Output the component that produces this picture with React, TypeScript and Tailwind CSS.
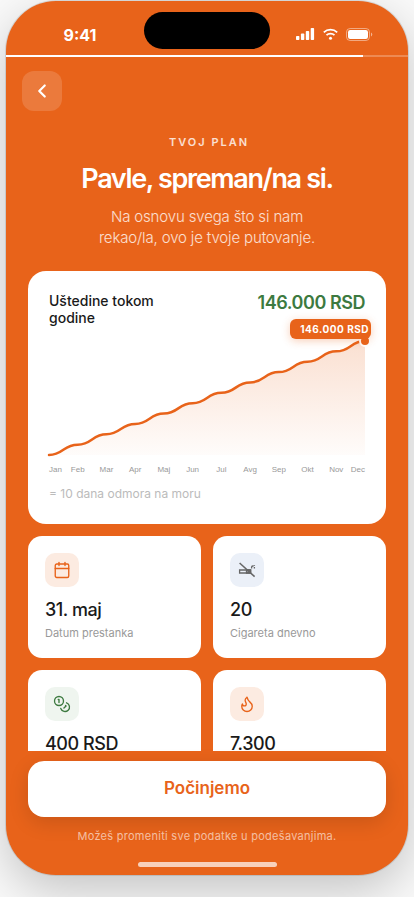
import type { ReactNode } from "react";
import { Calendar, ChevronLeft, Coins, Flame } from "lucide-react";

const MONTHS = [
  "Jan",
  "Feb",
  "Mar",
  "Apr",
  "Maj",
  "Jun",
  "Jul",
  "Avg",
  "Sep",
  "Okt",
  "Nov",
  "Dec",
];

const CHART = { width: 316, height: 143, top: 7, bottom: 121 };

const points = MONTHS.map((_, i) => {
  const ratio = i / (MONTHS.length - 1);
  return {
    x: ratio * CHART.width,
    y: CHART.bottom - ratio * (CHART.bottom - CHART.top),
  };
});

const linePath = points.reduce((path, p, i) => {
  if (i === 0) return `M${p.x},${p.y}`;
  const prev = points[i - 1];
  const mid = (prev.x + p.x) / 2;
  return `${path} C${mid},${prev.y} ${mid},${p.y} ${p.x},${p.y}`;
}, "");

const areaPath = `${linePath} L${CHART.width},${CHART.bottom} L0,${CHART.bottom} Z`;

const NoSmokingIcon = () => (
  <svg
    width="18"
    height="18"
    viewBox="0 0 18 18"
    fill="none"
    stroke="currentColor"
    strokeWidth="1.3"
    aria-hidden="true"
  >
    <path d="M1.6 9h11v3h-11z" />
    <path d="M8.5 9h4.1v3H8.5z" fill="currentColor" fillOpacity="0.6" />
    <path d="M13.6 7.4V6.2a1.2 1.2 0 0 1 1.2-1.2h.8M16.4 7.4V6M16.4 4.2v.8" />
    <path d="M1.6 2 16.6 15.6" strokeWidth="1.5" />
  </svg>
);

const StatusBar = () => (
  <div className="grid h-[54px] shrink-0 grid-cols-[1fr_auto_1fr] px-2.5 pt-[11px]">
    <div className="flex h-11 items-center justify-center pt-0.5 text-base font-bold">
      9:41
    </div>
    <div className="h-[37px] w-[126px] rounded-full bg-black" />
    <div className="flex h-11 items-center justify-center gap-2">
      <svg width="19" height="12" viewBox="0 0 19 12" fill="currentColor">
        <rect x="0" y="8" width="3.4" height="4" rx="0.8" />
        <rect x="4.9" y="5.6" width="3.4" height="6.4" rx="0.8" />
        <rect x="9.8" y="3" width="3.4" height="9" rx="0.8" />
        <rect x="14.7" y="0" width="3.4" height="12" rx="0.8" />
      </svg>
      <svg
        width="15"
        height="12"
        viewBox="1 0 15 12"
        fill="none"
        stroke="currentColor"
        strokeWidth="1.7"
      >
        <path d="M1.8 4.3a9.6 9.6 0 0 1 13.4 0" />
        <path d="M4.5 7.2a5.7 5.7 0 0 1 8 0" />
        <circle cx="8.5" cy="10.3" r="1.5" fill="currentColor" stroke="none" />
      </svg>
      <svg width="27" height="13" viewBox="0 0 27 13" fill="none">
        <rect
          x="0.5"
          y="0.5"
          width="23"
          height="12"
          rx="3.6"
          stroke="white"
          strokeOpacity="0.45"
        />
        <rect x="2" y="2" width="20" height="9" rx="2.2" fill="white" />
        <path d="M25 4.5v4a2.2 2.2 0 0 0 0-4" fill="white" fillOpacity="0.5" />
      </svg>
    </div>
  </div>
);

const SavingsCard = () => (
  <section className="rounded-[18px] bg-white p-[21px] text-[#1a1a1a]">
    <div className="flex items-start justify-between">
      <h2 className="w-[120px] text-sm leading-[17px] font-medium">
        Uštedine tokom godine
      </h2>
      <p className="text-lg leading-[22px] font-semibold tracking-tight text-[#3d7a40]">
        146.000 RSD
      </p>
    </div>
    <div className="relative mt-2">
      <svg
        viewBox={`0 0 ${CHART.width} ${CHART.height}`}
        className="block w-full overflow-visible"
        role="img"
      >
        <defs>
          <linearGradient id="area" x1="0" y1="0" x2="0" y2="1">
            <stop offset="0" stopColor="#e8631a" stopOpacity="0.2" />
            <stop offset="1" stopColor="#e8631a" stopOpacity="0.02" />
          </linearGradient>
        </defs>
        <path d={areaPath} fill="url(#area)" />
        <path
          d={linePath}
          fill="none"
          stroke="#e8631a"
          strokeWidth="2.5"
          strokeLinecap="round"
        />
        {points.map((p, i) => (
          <text
            key={MONTHS[i]}
            x={p.x}
            y="138"
            textAnchor={
              i === 0 ? "start" : i === MONTHS.length - 1 ? "end" : "middle"
            }
            className="fill-[#999999] font-['Liberation_Sans',sans-serif] text-[8px]"
          >
            {MONTHS[i]}
          </text>
        ))}
        <circle
          cx={CHART.width}
          cy={CHART.top}
          r="5"
          fill="#e8631a"
          stroke="white"
          strokeWidth="2"
        />
      </svg>
      <div className="absolute -top-[15px] -right-1.5 h-5 rounded-md bg-[#e8631a] pr-0.5 pl-2.5 text-[10px] leading-5 font-bold tracking-wider text-white shadow-[0_2px_8px_rgba(232,99,26,0.3)]">
        146.000 RSD
      </div>
    </div>
    <p className="mt-2 text-xs leading-[18px] text-[#bbbbbb]">
      = 10 dana odmora na moru
    </p>
  </section>
);

const StatCard = ({
  icon,
  value,
  label,
}: {
  icon: ReactNode;
  value: string;
  label: string;
}) => (
  <div className="rounded-[14px] bg-white p-[17px]">
    {icon}
    <p className="mt-3 text-lg leading-[22px] font-medium tracking-tight text-[#1a1a1a]">
      {value}
    </p>
    <p className="mt-1 text-[11px] leading-4 text-[#999999]">{label}</p>
  </div>
);

const App = () => {
  return (
    <div className="flex h-screen flex-col overflow-hidden bg-[#fafafa] px-1.5 pt-px pb-[22px] font-['Inter',sans-serif] text-white">
      <main className="flex min-h-0 flex-1 flex-col overflow-hidden rounded-[50px] bg-[#e8631a] shadow-[0_0_0_1px_rgba(0,0,0,0.1),0_16px_50px_rgba(0,0,0,0.22)]">
        <StatusBar />
        <div className="h-0.5 shrink-0 bg-white/25">
          <div className="h-full w-8/9 bg-white" />
        </div>

        <div className="min-h-0 flex-1 overflow-y-auto px-[22px] pt-3.5 [scrollbar-width:none]">
          <button
            type="button"
            aria-label="Nazad"
            className="-ml-1.5 flex size-10 items-center justify-center rounded-xl bg-white/15"
          >
            <ChevronLeft size={22} strokeWidth={2.4} />
          </button>

          <header className="mt-[23px] text-center">
            <p className="pl-1 text-[11px] leading-4 font-semibold tracking-[2px] text-white/80">
              TVOJ PLAN
            </p>
            <h1 className="mt-3 text-[27px] leading-[34px] font-semibold tracking-tighter">
              Pavle, spreman/na si.
            </h1>
            <p className="mx-auto mt-2.5 max-w-[240px] text-[15px] leading-[21px] font-light tracking-[-0.01em] text-white/80">
              Na osnovu svega što si nam rekao/la, ovo je tvoje putovanje.
            </p>
          </header>

          <div className="mt-[23px]">
            <SavingsCard />
          </div>

          <div className="mt-3 grid grid-cols-2 gap-3 pb-3">
            <StatCard
              icon={
                <div className="flex size-[34px] items-center justify-center rounded-[10px] bg-[#fcebe1] text-[#e8631a]">
                  <Calendar size={18} strokeWidth={1.8} />
                </div>
              }
              value="31. maj"
              label="Datum prestanka"
            />
            <StatCard
              icon={
                <div className="flex size-[34px] items-center justify-center rounded-[10px] bg-[#ebf0f8] text-[#666666]">
                  <NoSmokingIcon />
                </div>
              }
              value="20"
              label="Cigareta dnevno"
            />
            <StatCard
              icon={
                <div className="flex size-[34px] items-center justify-center rounded-[10px] bg-[#eff5ef] text-[#3d7a40]">
                  <Coins size={18} strokeWidth={1.8} />
                </div>
              }
              value="400 RSD"
              label="Dnevna ušteda"
            />
            <StatCard
              icon={
                <div className="flex size-[34px] items-center justify-center rounded-[10px] bg-[#fcebe1] text-[#e8631a]">
                  <Flame size={18} strokeWidth={1.8} />
                </div>
              }
              value="7.300"
              label="Cigareta godišnje"
            />
          </div>
        </div>

        <footer className="flex shrink-0 flex-col items-center px-[22px] pt-2.5 pb-2">
          <button
            type="button"
            className="h-14 w-full rounded-2xl bg-white text-[17px] font-semibold text-[#e8631a] shadow-[0_6px_20px_rgba(0,0,0,0.13)]"
          >
            Počinjemo
          </button>
          <p className="mt-[11px] text-[11px] leading-4 tracking-wide text-white/60">
            Možeš promeniti sve podatke u podešavanjima.
          </p>
          <div className="mt-[18px] h-[5px] w-[139px] rounded-full bg-white/70" />
        </footer>
      </main>
    </div>
  );
};

export default App;
